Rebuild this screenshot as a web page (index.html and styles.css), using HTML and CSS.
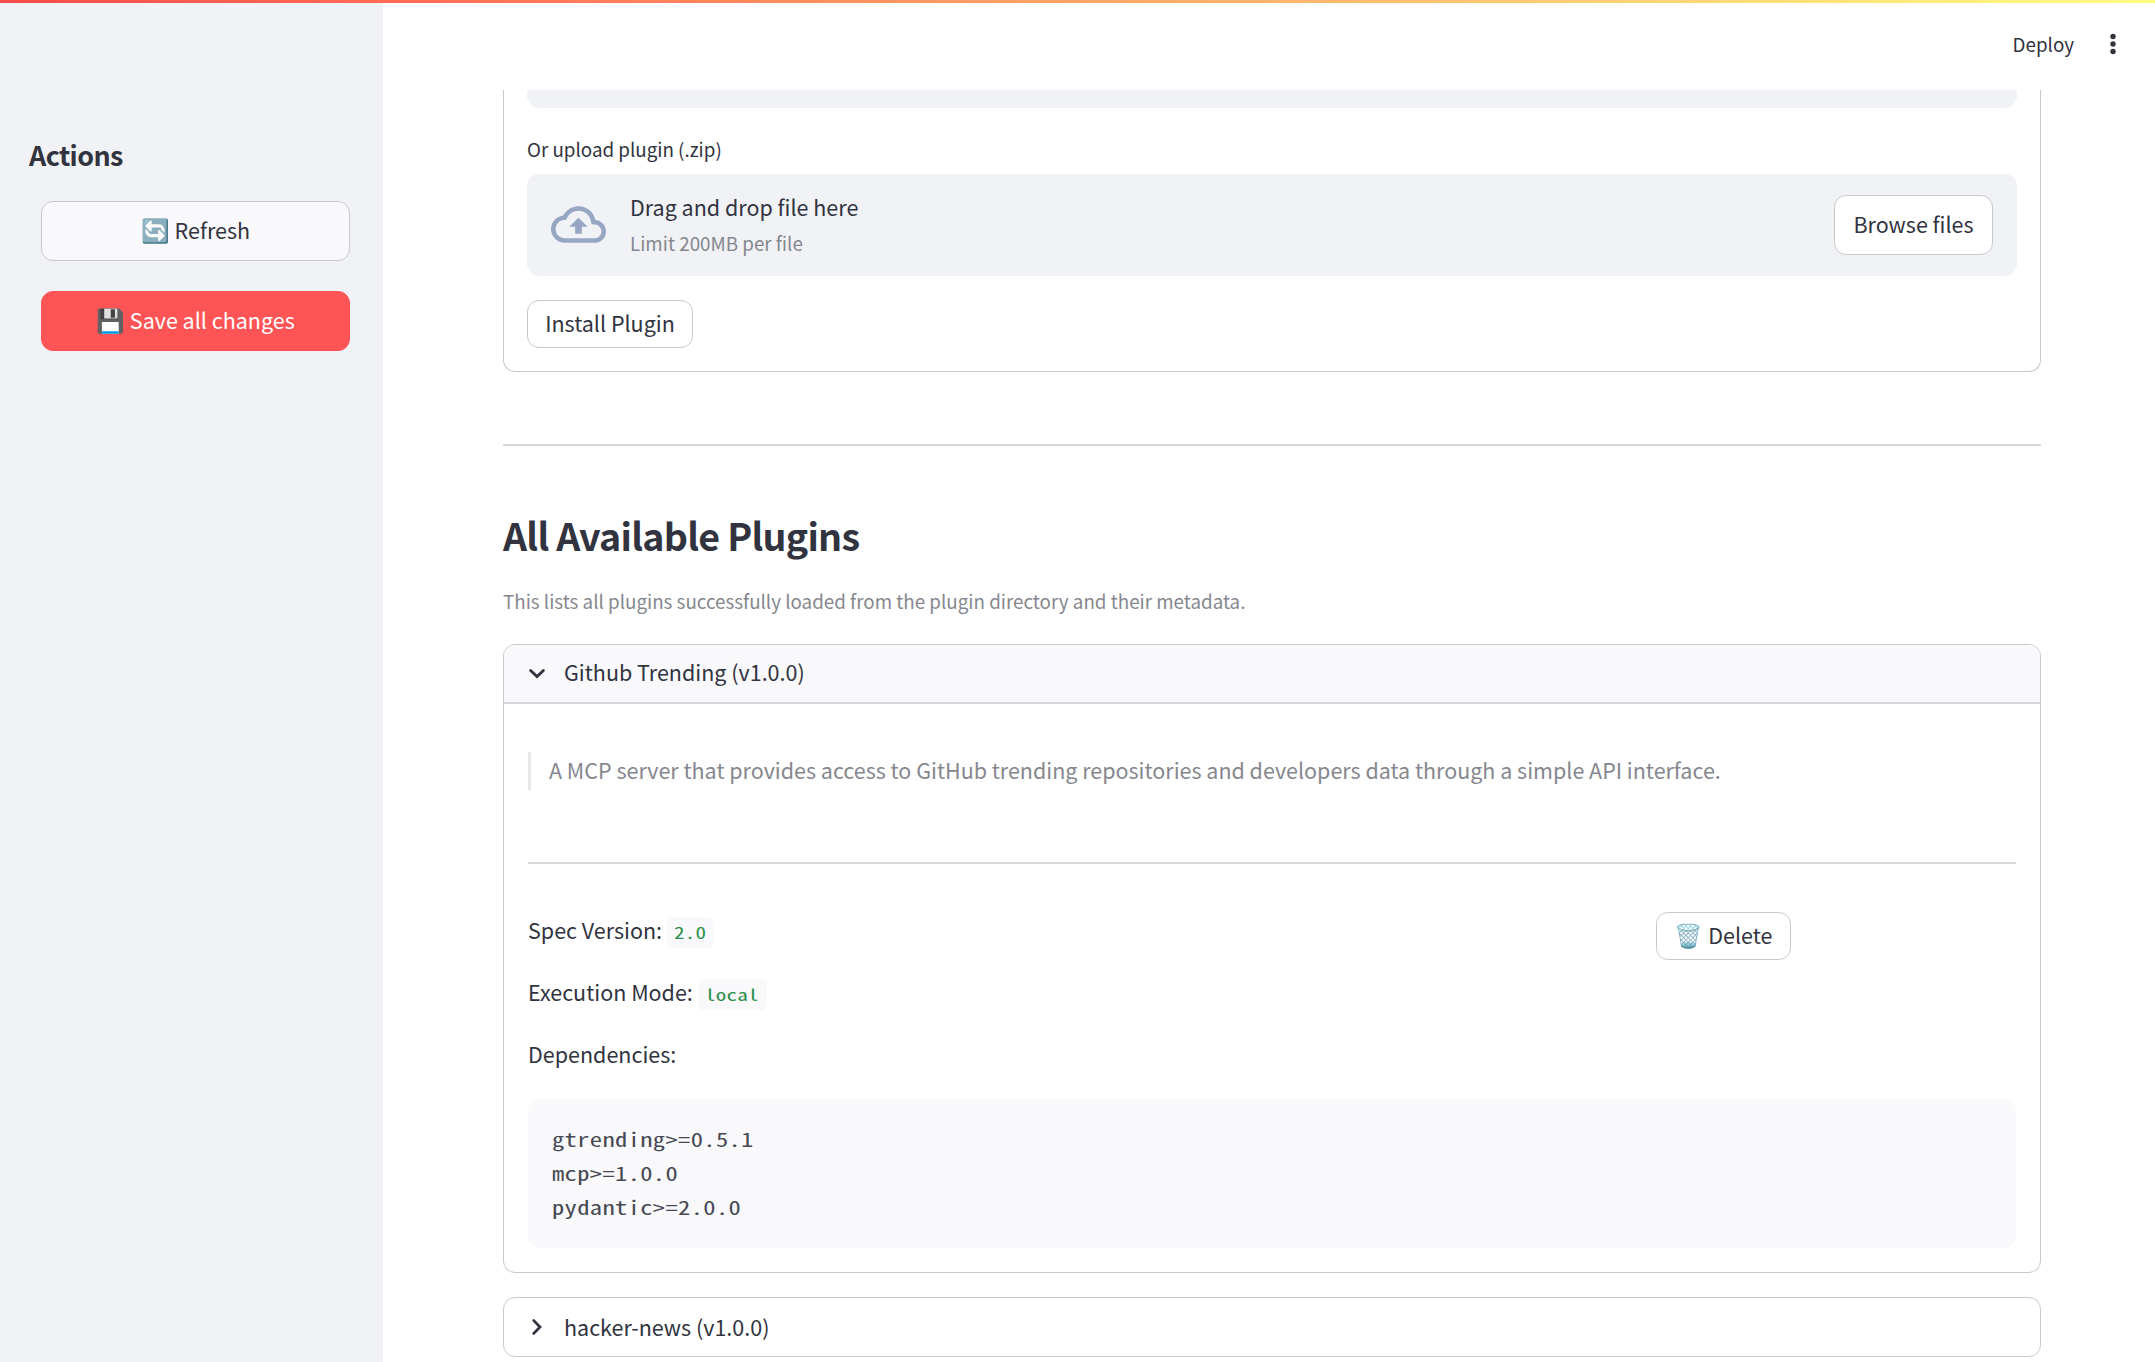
FILE: index.html
```html
<!DOCTYPE html>
<html lang="en">
<head>
<meta charset="utf-8">
<title>Plugins</title>
<link rel="stylesheet" href="styles.css">
</head>
<body>
<div class="rainbow"></div>
<div class="app">
  <aside class="sidebar">
    <h2 class="sidebar-title">Actions</h2>
    <button class="btn btn-wide btn-soft"><span class="emoji">🔄</span><span>Refresh</span></button>
    <button class="btn btn-wide btn-primary"><span class="emoji">💾</span><span>Save all changes</span></button>
  </aside>
  <main class="main">
    <header class="topbar">
      <span>Deploy</span>
      <svg class="dots" viewBox="0 0 8 24" width="8" height="24"><circle cx="4" cy="4.5" r="2.7"/><circle cx="4" cy="12" r="2.7"/><circle cx="4" cy="19.5" r="2.7"/></svg>
    </header>
    <section class="panel">
      <div class="input-end"></div>
      <div class="label">Or upload plugin (.zip)</div>
      <div class="dropzone">
        <svg class="cloud" viewBox="0 0 24 24" width="55" height="55"><path d="M19.35 10.04A7.49 7.49 0 0 0 12 4C9.11 4 6.6 5.64 5.35 8.04A5.994 5.994 0 0 0 0 14c0 3.31 2.69 6 6 6h13c2.76 0 5-2.24 5-5 0-2.64-2.05-4.78-4.65-4.96zM19 18H6c-2.21 0-4-1.79-4-4 0-2.05 1.53-3.76 3.56-3.97l1.07-.11.5-.95A5.469 5.469 0 0 1 12 6c2.62 0 4.88 1.86 5.39 4.43l.3 1.5 1.53.11A2.98 2.98 0 0 1 22 15c0 1.65-1.35 3-3 3zM8 13h2.55v3h2.9v-3H16l-4-4z"/></svg>
        <div class="drop-text">
          <div class="line">Drag and drop file here</div>
          <div class="hint">Limit 200MB per file</div>
        </div>
        <button class="btn btn-browse">Browse files</button>
      </div>
      <button class="btn btn-install">Install Plugin</button>
    </section>
    <div class="rule"></div>
    <h1 class="title">All Available Plugins</h1>
    <p class="caption">This lists all plugins successfully loaded from the plugin directory and their metadata.</p>
    <section class="expander">
      <div class="summary summary-open">
        <svg class="chev" viewBox="0 0 24 24" width="24" height="24"><path d="M5.6 8.4 12 14.6l6.4-6.2"/></svg>
        <span>Github Trending (v1.0.0)</span>
      </div>
      <div class="details">
        <blockquote class="quote">A MCP server that provides access to GitHub trending repositories and developers data through a simple API interface.</blockquote>
        <div class="rule"></div>
        <div class="columns">
          <div class="facts">
            <p class="line">Spec Version: <code class="tag tag-short"><span class="mono">2.0</span></code></p>
            <p class="line">Execution Mode: <code class="tag"><span class="mono">local</span></code></p>
            <p class="line">Dependencies:</p>
          </div>
          <div class="action">
            <button class="btn btn-delete"><span class="emoji">🗑️</span><span>Delete</span></button>
          </div>
        </div>
        <pre class="code"><span class="mono">gtrending&gt;=0.5.1
mcp&gt;=1.0.0
pydantic&gt;=2.0.0</span></pre>
      </div>
    </section>
    <section class="expander">
      <div class="summary">
        <svg class="chev" viewBox="0 0 24 24" width="24" height="24"><path d="m8.8 5.6 6.2 6.4-6.2 6.4"/></svg>
        <span>hacker-news (v1.0.0)</span>
      </div>
    </section>
  </main>
</div>
</body>
</html>
```
FILE: styles.css
```css
* { box-sizing: border-box; margin: 0; padding: 0; }

body {
  height: 1362px;
  overflow: hidden;
  background: #fff;
  color: #31333f;
  font-family: "Noto Sans CJK SC", "Noto Sans", sans-serif;
  font-size: 21.5px;
  line-height: 36px;
}

.rainbow {
  position: absolute;
  inset: 0 0 auto 0;
  height: 3px;
  background: linear-gradient(90deg, #ff4b4b, #fffd80);
}

.app { display: flex; height: 1362px; }

.sidebar {
  flex: none;
  width: 383px;
  padding: 138px 33px 0 29px;
  background: #f0f2f6;
}
.sidebar-title { font-size: 26.9px; line-height: 34px; font-weight: 700; letter-spacing: -0.6px; }

.main { flex: 1; padding: 0 114px 0 120px; }

.topbar {
  display: flex;
  align-items: center;
  justify-content: flex-end;
  gap: 35px;
  height: 90px;
  padding-bottom: 2px;
  margin-right: -76px;
  font-size: 18.8px;
}
.dots { fill: #31333f; }

.btn {
  display: flex;
  align-items: center;
  justify-content: center;
  gap: 5px;
  border: 1px solid #c8c9cc;
  border-radius: 12px;
  background: #fff;
  color: inherit;
  font: inherit;
  padding: 0 0 3px;
  white-space: nowrap;
}
.emoji { padding-top: 4px; font-size: 23px; font-family: "Noto Color Emoji", sans-serif; line-height: 30px; }
.btn-wide { width: 309px; height: 60px; margin: 30px 0 0 12px; padding-bottom: 2px; }
.btn-soft { margin-top: 29px; background: #f9f9fb; }
.btn-primary { background: #ff5455; border-color: #ff5455; color: #fff; }

.panel {
  height: 282px;
  padding: 0 23px;
  border: 1px solid #c9cacd;
  border-top: 0;
  border-radius: 0 0 12px 12px;
}
.input-end { height: 18px; border-radius: 0 0 12px 12px; background: #f0f2f6; }
.label { margin-top: 26px; font-size: 18.8px; line-height: 30px; }
.dropzone {
  display: flex;
  align-items: center;
  height: 102px;
  margin-top: 10px;
  padding: 0 24px;
  border-radius: 12px;
  background: #f0f2f6;
}
.cloud { fill: #97a6c3; margin-bottom: 1px; }
.drop-text { flex: 1; margin-left: 24px; padding-bottom: 4px; }
.hint { margin-top: 3px; font-size: 18.8px; line-height: 30px; color: #86878e; }
.btn-browse { width: 159px; height: 60px; }
.btn-install { width: 166px; height: 48px; margin-top: 24px; }

.rule { height: 2px; margin-top: 72px; background: #d6d7da; }

.title { margin-top: 64px; font-size: 37.6px; line-height: 50px; font-weight: 700; letter-spacing: -0.75px; }
.caption { margin-top: 26px; font-size: 18.8px; line-height: 30px; color: #86878e; }

.expander {
  margin-top: 28px;
  border: 1px solid #c9cacd;
  border-radius: 12px;
  overflow: hidden;
}
.expander + .expander { margin-top: 24px; }
.summary { display: flex; align-items: center; gap: 15px; height: 58px; padding: 0 21px; }
.summary span { padding-bottom: 1px; }
.summary-open { height: 59px; background: #f9f9fb; border-bottom: 2px solid #d6d7da; }
.summary-open span { padding-bottom: 3px; }
.chev { fill: none; stroke: #31333f; stroke-width: 2.8; stroke-linecap: round; }

.details { padding: 0 24px 24px; }
.quote {
  margin-top: 48px;
  height: 38px;
  padding-left: 18px;
  border-left: 3px solid #e6e7ea;
  line-height: 36px;
  letter-spacing: -0.01px;
  color: #86878e;
}
.columns { display: grid; grid-template-columns: 1128px 1fr; margin-top: 48px; }
.facts { display: flex; flex-direction: column; gap: 26px; }
.facts .line { height: 36px; }
.btn-delete { width: 135px; height: 48px; }

.mono {
  display: inline-block;
  transform: scaleX(1.305);
  transform-origin: left;
}
.tag {
  display: inline-block;
  width: 69px;
  height: 31px;
  padding: 0 7px;
  vertical-align: 0;
  border-radius: 6px;
  background: #f9f9fb;
  color: #2b8f4b;
  font: 16.1px/30px "Noto Sans Mono CJK SC", "Liberation Mono", monospace;
  letter-spacing: 0.2px;
}
.tag-short { width: 47px; }
.code {
  height: 149px;
  margin-top: 27px;
  padding: 23px 24px;
  border-radius: 12px;
  background: #f9f9fb;
  color: #464853;
  font: 18.8px/33.8px "Noto Sans Mono CJK SC", "Liberation Mono", monospace;
  letter-spacing: 0.27px;
}
```
